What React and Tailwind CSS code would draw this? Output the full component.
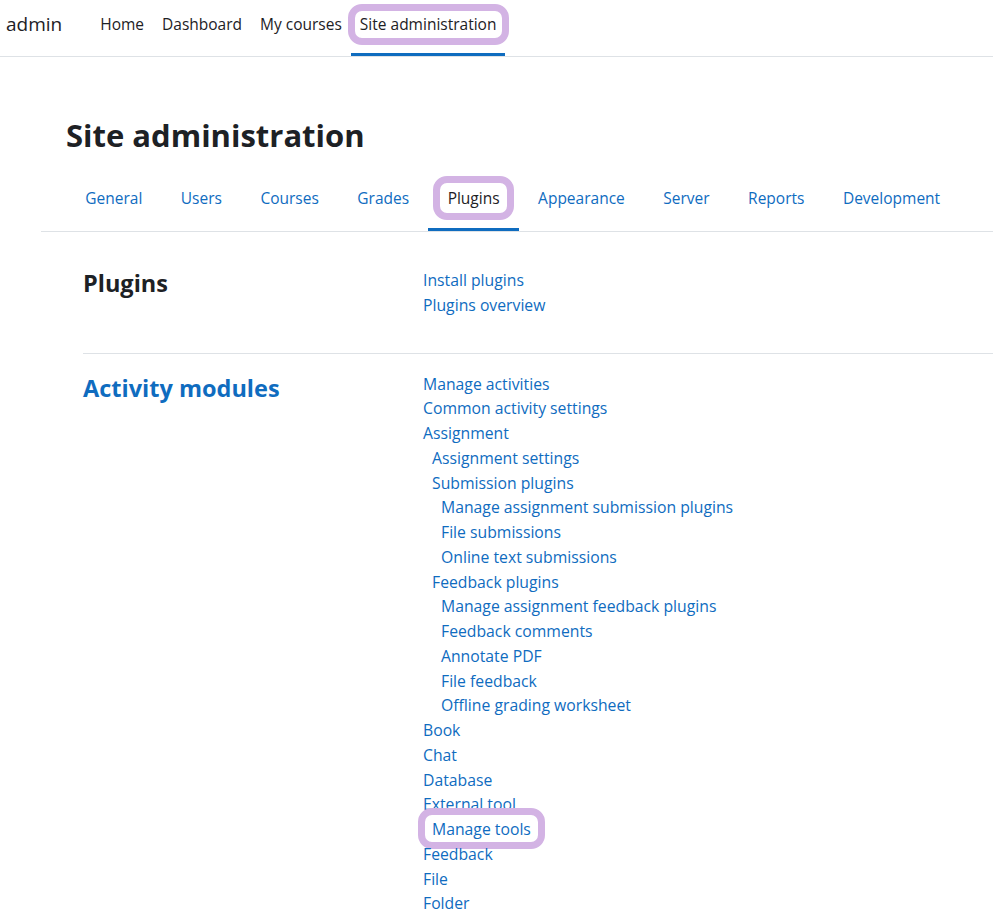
import React from "react";

const FONT = { fontFamily: '"Open Sans", "Noto Sans", sans-serif' };

const links = [
  ["Manage activities", 0],
  ["Common activity settings", 0],
  ["Assignment", 0],
  ["Assignment settings", 1],
  ["Submission plugins", 1],
  ["Manage assignment submission plugins", 2],
  ["File submissions", 2],
  ["Online text submissions", 2],
  ["Feedback plugins", 1],
  ["Manage assignment feedback plugins", 2],
  ["Feedback comments", 2],
  ["Annotate PDF", 2],
  ["File feedback", 2],
  ["Offline grading worksheet", 2],
  ["Book", 0],
  ["Chat", 0],
  ["Database", 0],
  ["External tool", 0],
  ["Manage tools", 1, true],
  ["Feedback", 0],
  ["File", 0],
  ["Folder", 0],
];

const tabs = ["General", "Users", "Courses", "Grades", "Plugins", "Appearance", "Server", "Reports", "Development"];

function Highlight({ className }) {
  return (
    <span
      className={
        "pointer-events-none absolute rounded-[14px] border-[7px] border-[#d3b3e4] " + className
      }
    />
  );
}

export default function App() {
  return (
    <div className="min-h-[922px] bg-white text-[#1d2125] overflow-hidden" style={FONT}>
      {/* top nav */}
      <header className="flex h-[57px] items-start border-b border-[#dee2e6]">
        <div className="ml-[6px] mt-[10px] text-[19px] leading-[28px]">admin</div>
        <nav className="ml-[29px] flex text-[15.5px] leading-[24px]">
          <a className="relative px-[9px] pt-[12px] pb-[20px]">Home</a>
          <a className="relative px-[9px] pt-[12px] pb-[20px]">Dashboard</a>
          <a className="relative px-[9px] pt-[12px] pb-[20px]">My courses</a>
          <a className="relative px-[9px] pt-[12px] pb-[20px]">
            Site administration
            <Highlight className="left-[-3px] right-[-4px] top-[4px] bottom-[11px]" />
            <span className="absolute bottom-0 left-0 right-0 h-[3px] bg-[#0f6cbf]" />
          </a>
        </nav>
      </header>

      {/* page */}
      <div className="pl-[41px]">
        <div className="pl-[25px]">
          <h2 className="pt-[58px] text-[31px] font-bold leading-[40px]">Site administration</h2>
        </div>
        <div className="mt-[21px] border-b border-[#dee2e6] pl-[25px]">
          <nav className="flex text-[15.5px] leading-[24px] text-[#0f6cbf]">
            {tabs.map((t) => (
              <a
                key={t}
                className={
                  "relative px-[19.25px] pt-[10px] pb-[21px] " + (t === "Plugins" ? "text-[#1d2125]" : "")
                }
              >
                {t}
                {t === "Plugins" && (
                  <>
                    <Highlight className="left-[5px] right-[5px] top-[0px] bottom-[11px]" />
                    <span className="absolute bottom-0 left-0 right-0 h-[3px] bg-[#0f6cbf]" />
                  </>
                )}
              </a>
            ))}
          </nav>
        </div>

        {/* content */}
        <div className="pl-[42px] pt-[36px]">
          <div className="grid grid-cols-[340px_1fr]">
            <h3 className="pt-[1px] text-[23.5px] font-bold leading-[28px]">Plugins</h3>
            <div className="flex flex-col text-[15.75px] leading-[24.75px] text-[#0f6cbf]">
              <a>Install plugins</a>
              <a>Plugins overview</a>
            </div>
          </div>
          <hr className="mt-[35px] border-t border-[#dee2e6]" />
          <div className="grid grid-cols-[340px_1fr] pt-[18px]">
            <h3 className="text-[23.5px] font-bold leading-[32px] text-[#0f6cbf]">Activity modules</h3>
            <div className="flex flex-col text-[15.75px] leading-[24.75px] text-[#0f6cbf]">
              {links.map(([t, lvl, hl]) => (
                <div
                  key={t + lvl}
                  className={lvl === 0 ? "" : lvl === 1 ? "pl-[9px]" : "pl-[18px]"}
                >
                  <a className="relative">
                    {t}
                    {hl && <Highlight className="left-[-14px] right-[-14px] top-[-10px] bottom-[-9px]" />}
                  </a>
                </div>
              ))}
            </div>
          </div>
        </div>
      </div>
    </div>
  );
}
